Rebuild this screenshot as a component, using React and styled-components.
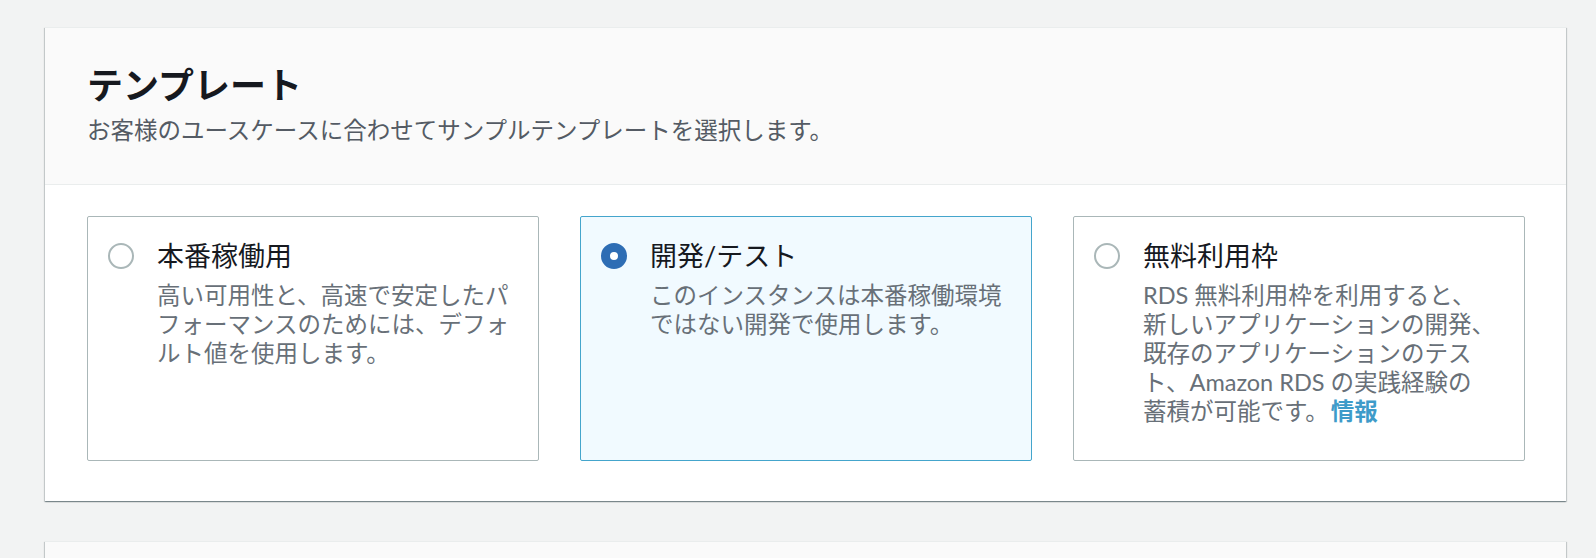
import React, { useState } from "react";
import styled, { createGlobalStyle } from "styled-components";

const GlobalStyle = createGlobalStyle`
  html, body {
    margin: 0;
    padding: 0;
    background: #f2f3f3;
    font-family: Lato, "Noto Sans CJK JP", sans-serif;
    overflow: hidden;
  }
`;

const Page = styled.div`
  display: flex;
  flex-direction: column;
  gap: 40px;
  padding: 27px 30px 0 45px;
  height: 558px;
  box-sizing: border-box;
`;

const Panel = styled.section`
  background: #fff;
  border-top: 1px solid #eaeded;
  box-shadow: 0 1px 1px 0 rgba(0, 28, 36, 0.3), 1px 1px 1px 0 rgba(0, 28, 36, 0.15),
    -1px 1px 1px 0 rgba(0, 28, 36, 0.15);
  flex-shrink: 0;
`;

const PanelHeader = styled.header`
  background: #fafafa;
  border-bottom: 1px solid #eaeded;
  padding: 37px 42px 40px;
  min-height: ${(p) => p.$minHeight || 0}px;
`;

const Title = styled.h2`
  margin: 0;
  font-size: 36px;
  line-height: 40px;
  font-weight: 700;
  color: #16191f;
`;

const Subtitle = styled.p`
  margin: 11px 0 0;
  font-size: 23.5px;
  line-height: 28px;
  color: #545b64;
`;

const PanelBody = styled.div`
  display: grid;
  grid-template-columns: repeat(3, 1fr);
  gap: 41px;
  padding: 31px 41px 40px 42px;
`;

const Tile = styled.label`
  display: flex;
  align-items: flex-start;
  padding: 22px 20px 34px 20px;
  border: 1px solid ${(p) => (p.$selected ? "#44a5cc" : "#aab7b8")};
  background: ${(p) => (p.$selected ? "#f1faff" : "#fff")};
  border-radius: 2px;
  cursor: pointer;
`;

const Radio = styled.span`
  flex: 0 0 26px;
  width: 26px;
  height: 26px;
  margin-top: 4px;
  margin-right: 23px;
  box-sizing: border-box;
  border-radius: 50%;
  border: ${(p) => (p.$checked ? "9px solid #2e6db4" : "2px solid #aab7b8")};
  background: #fff;
`;

const TileText = styled.div`
  display: flex;
  flex-direction: column;
`;

const TileTitle = styled.div`
  font-size: 27px;
  line-height: 34px;
  color: #16191f;
`;

const TileDesc = styled.div`
  margin-top: 8px;
  font-size: 23.5px;
  line-height: 29px;
  color: #687078;
  white-space: nowrap;
`;

const InfoLink = styled.a`
  color: #3e9bc9;
  font-weight: 700;
  text-decoration: none;
  margin-left: 2px;
`;

const options = [
  {
    id: "prod",
    title: "本番稼働用",
    lines: ["高い可用性と、高速で安定したパ", "フォーマンスのためには、デフォ", "ルト値を使用します。"],
  },
  {
    id: "dev",
    title: "開発/テスト",
    lines: ["このインスタンスは本番稼働環境", "ではない開発で使用します。"],
  },
  {
    id: "free",
    title: "無料利用枠",
    lines: [
      "RDS 無料利用枠を利用すると、",
      "新しいアプリケーションの開発、",
      "既存のアプリケーションのテス",
      "ト、Amazon RDS の実践経験の",
      "蓄積が可能です。",
    ],
    info: true,
  },
];

const App = () => {
  const [selected, setSelected] = useState("dev");

  return (
    <>
      <GlobalStyle />
      <Page>
        <Panel>
          <PanelHeader>
            <Title>テンプレート</Title>
            <Subtitle>お客様のユースケースに合わせてサンプルテンプレートを選択します。</Subtitle>
          </PanelHeader>
          <PanelBody>
            {options.map((o) => (
              <Tile key={o.id} $selected={selected === o.id} onClick={() => setSelected(o.id)}>
                <Radio $checked={selected === o.id} />
                <TileText>
                  <TileTitle>{o.title}</TileTitle>
                  <TileDesc>
                    {o.lines.map((line, i) => (
                      <React.Fragment key={i}>
                        {i > 0 && <br />}
                        {line}
                      </React.Fragment>
                    ))}
                    {o.info && <InfoLink href="#info">情報</InfoLink>}
                  </TileDesc>
                </TileText>
              </Tile>
            ))}
          </PanelBody>
        </Panel>

        {/* next section, cut off by the window */}
        <Panel>
          <PanelHeader $minHeight={120} />
        </Panel>
      </Page>
    </>
  );
};

export default App;
